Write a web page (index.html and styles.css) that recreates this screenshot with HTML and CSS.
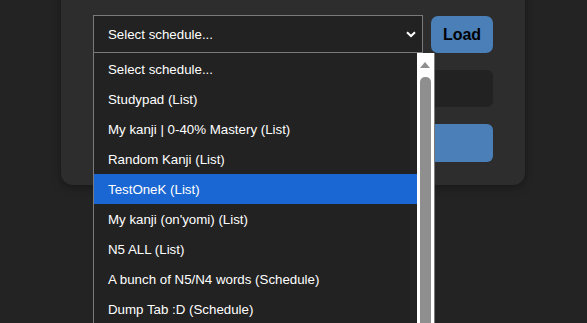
FILE: index.html
```html
<!DOCTYPE html>
<html lang="en">
<head>
    <meta charset="UTF-8">
    <meta name="viewport" content="width=device-width, initial-scale=1.0">
    <title>Schedules</title>
    <link rel="stylesheet" href="styles.css">
</head>
<body>
    <div class="card">
        <div class="load-row">
            <div class="schedule-select">
                <span>Select schedule...</span>
                <svg class="chevron" width="10" height="7" viewBox="0 0 10 7">
                    <path d="M1 1.2 L5 5 L9 1.2" fill="none" stroke="#fff" stroke-width="2"/>
                </svg>
            </div>
            <button class="load-button">Load</button>
        </div>
        <div class="name-input"></div>
        <div class="save-button"></div>

        <div class="dropdown">
            <ul class="options">
                <li>Select schedule...</li>
                <li>Studypad (List)</li>
                <li>My kanji | 0-40% Mastery (List)</li>
                <li>Random Kanji (List)</li>
                <li class="selected">TestOneK (List)</li>
                <li>My kanji (on'yomi) (List)</li>
                <li>N5 ALL (List)</li>
                <li>A bunch of N5/N4 words (Schedule)</li>
                <li>Dump Tab :D (Schedule)</li>
            </ul>
            <div class="scrollbar">
                <div class="arrow-up"></div>
                <div class="thumb"></div>
            </div>
        </div>
    </div>
</body>
</html>
```

FILE: styles.css
```css
* {
    margin: 0;
    padding: 0;
    box-sizing: border-box;
}
body {
    background-color: #232323;
    font-family: "Liberation Sans", Arial, sans-serif;
    height: 100vh;
    overflow: hidden;
}
.card {
    position: relative;
    margin-left: 61px;
    margin-top: -30px;
    width: 464px;
    padding: 45px 32px 23px 32px;
    background-color: #2d2d2d;
    border-radius: 12px;
    box-shadow: 0 2px 10px rgba(0, 0, 0, 0.35);
}
.load-row {
    display: flex;
    gap: 8px;
    height: 38px;
}
.schedule-select {
    width: 330px;
    height: 38px;
    display: flex;
    align-items: center;
    justify-content: space-between;
    padding: 0 6px 0 14px;
    background-color: #222222;
    border: 1px solid #7a7a7a;
    color: #ffffff;
    font-size: 13.3px;
}
.chevron {
    margin-top: 1px;
}
.load-button {
    width: 62px;
    height: 37px;
    margin-top: 1px;
    border: none;
    border-radius: 7px;
    background-color: #4a7fb8;
    color: #000;
    font-family: "Liberation Sans", Arial, sans-serif;
    font-weight: bold;
    font-size: 16px;
}
.name-input {
    height: 37px;
    margin-top: 17px;
    background-color: #222222;
    border-radius: 6px;
}
.save-button {
    height: 38px;
    margin-top: 17px;
    background-color: #4a7fb8;
    border-radius: 6px;
}
.dropdown {
    position: absolute;
    top: 83px;
    left: 32px;
    width: 342px;
    height: 270px;
    display: flex;
    overflow: hidden;
    background-color: #222222;
    border-left: 1px solid #7a7a7a;
    border-right: 1px solid #7a7a7a;
}
.options {
    list-style-type: none;
    flex: 1;
    padding-top: 1px;
}
.options li {
    height: 30px;
    line-height: 31px;
    padding-left: 14px;
    color: #ffffff;
    font-size: 13.3px;
    white-space: nowrap;
}
.options li.selected {
    background-color: #1a66d2;
}
.scrollbar {
    width: 17px;
    background-color: #ffffff;
}
.arrow-up {
    width: 0;
    height: 0;
    margin: 9px 0 0 3px;
    border-left: 5.5px solid transparent;
    border-right: 5.5px solid transparent;
    border-bottom: 6px solid #8f8f8f;
}
.thumb {
    width: 11px;
    height: 300px;
    margin: 9px 0 0 3px;
    background-color: #8f8f8f;
    border-radius: 5px 5px 0 0;
}
```
